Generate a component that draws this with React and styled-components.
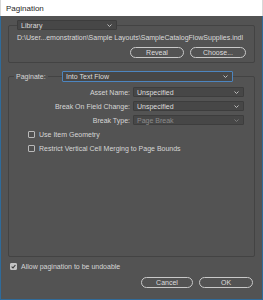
import React from "react";
import styled, { createGlobalStyle } from "styled-components";

const Global = createGlobalStyle`
  html, body { margin: 0; padding: 0; background: #535353; }
  body { font-family: "Liberation Sans", Arial, sans-serif; }
  * { box-sizing: border-box; }
`;

const Window = styled.div`
  width: 263px;
  height: 300px;
  display: flex;
  flex-direction: column;
  overflow: hidden;
`;

const TitleBar = styled.div`
  height: 16px;
  flex: none;
  background: #ffffff;
  color: #1f1f1f;
  font-size: 8px;
  display: flex;
  align-items: center;
  padding-left: 5px;
  border-left: 1px solid #d8d8d8;
  border-right: 1px solid #d8d8d8;
`;

const Body = styled.div`
  flex: 1;
  background: #535353;
  border: 1px solid #2f6b9a;
  border-top: none;
  padding: 0 7px 0 7px;
  display: flex;
  flex-direction: column;
  color: #d6d6d6;
  font-size: 7px;
`;

const Group = styled.fieldset`
  margin: ${(p) => p.$top}px 0 0 0;
  padding: 0 ${(p) => p.$padRight}px ${(p) => p.$padBottom}px ${(p) => p.$padLeft}px;
  border: 1px solid #434343;
  border-radius: 2px;
  min-width: 0;
  display: flex;
  flex-direction: column;
  flex: ${(p) => (p.$grow ? 1 : "none")};
`;

const Legend = styled.legend`
  padding: 0;
  margin-left: ${(p) => p.$offset || 0}px;
  width: ${(p) => (p.$w ? `${p.$w}px` : "auto")};
  display: flex;
  align-items: center;
`;

const LegendLabel = styled.span`
  padding: 0 2px;
  color: #d6d6d6;
  font-size: 7px;
`;

const LegendRule = styled.span`
  flex: 1;
  height: 0;
  border-top: 1px solid #434343;
  align-self: center;
`;

const Select = styled.div`
  width: ${(p) => p.$w}px;
  flex: none;
  height: ${(p) => p.$h || 10}px;
  background: #474747;
  border: 1px solid ${(p) => (p.$focus ? "#4d85bf" : "#3d3d3d")};
  border-radius: 1px;
  display: flex;
  align-items: center;
  justify-content: space-between;
  padding: 0 4px 0 3px;
  color: ${(p) => (p.$disabled ? "#8b8b8b" : "#dcdcdc")};
  font-size: 7px;
  white-space: nowrap;
`;

const Chevron = ({ dim }) => (
  <svg width="5" height="3" viewBox="0 0 5 3">
    <path d="M0.5 0.5 L2.5 2.5 L4.5 0.5" fill="none" stroke={dim ? "#7a7a7a" : "#bdbdbd"} strokeWidth="1" />
  </svg>
);

const PathText = styled.div`
  margin-top: 3px;
  line-height: 9px;
  white-space: nowrap;
  color: #dadada;
`;

const ButtonRow = styled.div`
  display: flex;
  justify-content: flex-end;
  gap: 6px;
  margin-top: ${(p) => p.$top}px;
`;

const PillButton = styled.button`
  width: ${(p) => p.$w}px;
  height: 11px;
  border: 1px solid #c9c9c9;
  border-radius: 6px;
  background: transparent;
  color: #dcdcdc;
  font-family: inherit;
  font-size: 7px;
  padding: 0;
  line-height: 9px;
`;

const FieldGrid = styled.div`
  display: grid;
  grid-template-columns: 1fr 111px;
  column-gap: 3px;
  row-gap: 4px;
  align-items: center;
  margin-top: 5px;
`;

const FieldLabel = styled.span`
  text-align: right;
  color: #d6d6d6;
  white-space: nowrap;
`;

const CheckList = styled.div`
  display: flex;
  flex-direction: column;
  gap: 7px;
  margin-top: 6px;
  padding-left: ${(p) => p.$indent}px;
`;

const CheckRow = styled.label`
  display: flex;
  align-items: center;
  gap: 4px;
  height: 7px;
  white-space: nowrap;
  color: #d6d6d6;
`;

const Box = styled.span`
  width: 7px;
  height: 7px;
  flex: none;
  border: 1px solid ${(p) => (p.$checked ? "#c4c4c4" : "#b9b9b9")};
  border-radius: 1px;
  background: ${(p) => (p.$checked ? "#c4c4c4" : "#505050")};
  display: flex;
  align-items: center;
  justify-content: center;
`;

const Check = ({ checked, label }) => (
  <CheckRow>
    <Box $checked={checked}>
      {checked && (
        <svg width="5" height="5" viewBox="0 0 5 5">
          <path d="M0.6 2.6 L2 3.9 L4.4 1" fill="none" stroke="#3a3a3a" strokeWidth="1.1" />
        </svg>
      )}
    </Box>
    {label}
  </CheckRow>
);

const Footer = styled.div`
  display: flex;
  flex-direction: column;
  padding: 0 2px 11px 2px;
`;

export default function App() {
  return (
    <>
      <Global />
      <Window>
        <TitleBar>Pagination</TitleBar>
        <Body>
          <Group $top={4} $padLeft={8} $padRight={8} $padBottom={4}>
            <Legend>
              <Select $w={100}>
                Library <Chevron />
              </Select>
            </Legend>
            <PathText>D:\User...emonstration\Sample Layouts\SampleCatalogFlowSupplies.indl</PathText>
            <ButtonRow $top={5}>
              <PillButton $w={54}>Reveal</PillButton>
              <PillButton $w={56}>Choose...</PillButton>
            </ButtonRow>
          </Group>

          <Group $top={8} $padLeft={0} $padRight={10} $padBottom={4} $grow>
            <Legend $offset={5} $w={219}>
              <LegendLabel>Paginate:</LegendLabel>
              <LegendRule />
              <Select $w={171} $h={11} $focus>
                Into Text Flow <Chevron />
              </Select>
            </Legend>
            <FieldGrid>
              <FieldLabel>Asset Name:</FieldLabel>
              <Select $w={111}>
                Unspecified <Chevron />
              </Select>
              <FieldLabel>Break On Field Change:</FieldLabel>
              <Select $w={111}>
                Unspecified <Chevron />
              </Select>
              <FieldLabel>Break Type:</FieldLabel>
              <Select $w={111} $disabled>
                Page Break <Chevron dim />
              </Select>
            </FieldGrid>
            <CheckList $indent={19}>
              <Check label="Use Item Geometry" />
              <Check label="Restrict Vertical Cell Merging to Page Bounds" />
            </CheckList>
          </Group>

          <Footer>
            <CheckList $indent={0}>
              <Check checked label="Allow pagination to be undoable" />
            </CheckList>
            <ButtonRow $top={7}>
              <PillButton $w={52}>Cancel</PillButton>
              <PillButton $w={54}>OK</PillButton>
            </ButtonRow>
          </Footer>
        </Body>
      </Window>
    </>
  );
}
